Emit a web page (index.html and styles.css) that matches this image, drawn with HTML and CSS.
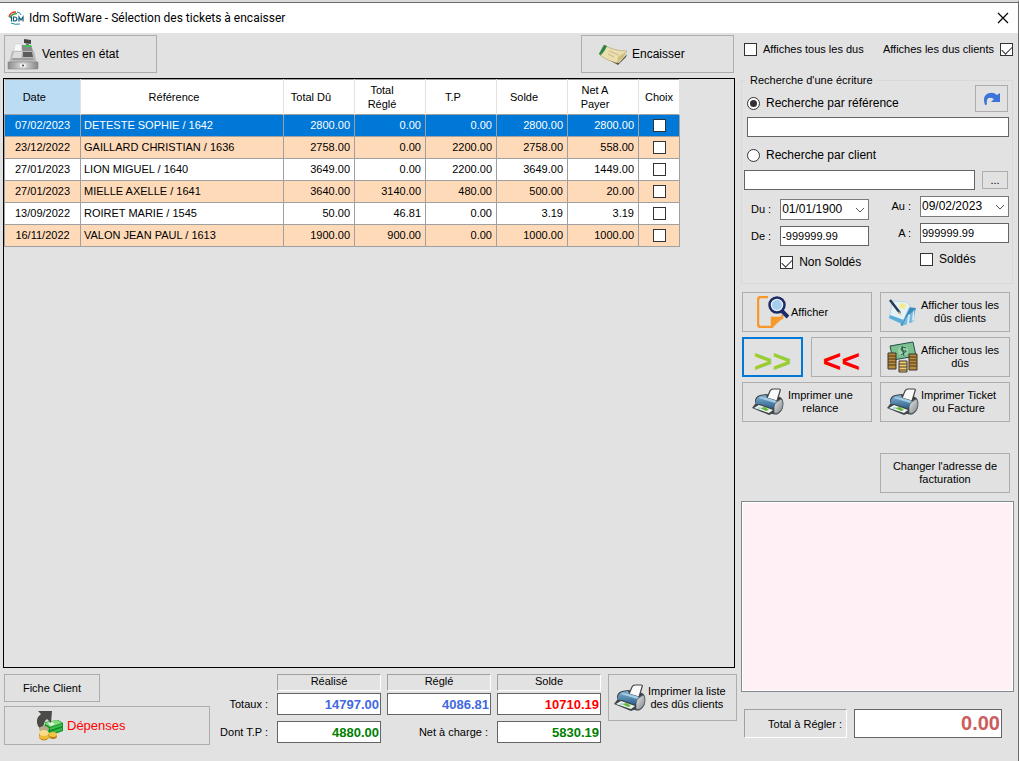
FILE: index.html
```html
<!DOCTYPE html>
<html lang="fr">
<head>
    <meta charset="UTF-8">
    <meta name="viewport" content="width=device-width, initial-scale=1.0">
    <title>Idm SoftWare - Sélection des tickets à encaisser</title>
    <link rel="stylesheet" href="styles.css">
</head>
<body>
    <svg class="defs" aria-hidden="true">
        <defs>
            <linearGradient id="blue" x1="0" y1="0" x2="0" y2="1">
                <stop offset="0" stop-color="#86b4d3"/>
                <stop offset="1" stop-color="#285f8b"/>
            </linearGradient>
            <linearGradient id="steel" x1="0" y1="0" x2="1" y2="0">
                <stop offset="0" stop-color="#8c8c8c"/>
                <stop offset=".5" stop-color="#dedede"/>
                <stop offset="1" stop-color="#858585"/>
            </linearGradient>
            <linearGradient id="side" x1="0" y1="0" x2="1" y2="1">
                <stop offset="0" stop-color="#e8eaec"/>
                <stop offset="1" stop-color="#7d8388"/>
            </linearGradient>
        </defs>
        <symbol id="printer" viewBox="0 0 32 28">
            <path d="M3 12Q4 8 8 7l6-1 14 3q4 2 3 8 0 6-5 9-2 1-5 0L4 21z" fill="#3a4046"/>
            <path d="M15 10 18 3q1-2 3-2h6q2 0 1 2l-3 10z" fill="#fafafa" stroke="#444" stroke-width="1.2"/>
            <path d="M4 12Q5 9 8 8l6-1 1 3 10 3-3 5-1 3L4 16z" fill="url(#blue)"/>
            <path d="m7 10 16 5 2-2-10-3-7-1z" fill="#a4cde4"/>
            <path d="M22 19q0-4 4-6l3-2q2 1 2 5 0 6-5 9-2 1-4 0z" fill="url(#side)" stroke="#55595e" stroke-width=".8"/>
            <path d="M3 16 0 20l17 7 5-2v-4L8 16z" fill="#42474c"/>
            <path d="m2 20 5-3 14 5-4 3z" fill="#eef4ef"/>
            <path d="m8 20 5-1 4 3-3 1z" fill="#62b938"/>
            <path d="m5 20 3-1 1 1-2 1z" fill="#8ad0ee"/>
        </symbol>
    </svg>

    <div class="window">
        <header class="titlebar">
            <svg class="logo" viewBox="0 0 16 14" aria-hidden="true">
                <path d="M1 6Q2 1 8 1" fill="none" stroke="#e23b2e" stroke-width="1.4"/>
                <path d="M2 7Q3 3 9 2.500" fill="none" stroke="#44a047" stroke-width="1.4"/>
                <path d="M9 1q3 0 4 3M3 12q4 2 9 1" fill="none" stroke="#1b8ca6" stroke-width="1"/>
                <path d="M3.500 5.500v5M5.500 6v4h1.500q2-.5 2-2T7 6zM11 10.500V6l2 3 2-3v4.500" fill="none" stroke="#0f5e7c" stroke-width="1.2"/>
            </svg>
            <h1 class="title">Idm SoftWare - Sélection des tickets à encaisser</h1>
            <button type="button" class="close" aria-label="Fermer">
                <svg viewBox="0 0 10 10" width="10" height="10"><path d="m0 0 10 10M10 0 0 10" stroke="#000" stroke-width="1.2"/></svg>
            </button>
        </header>

        <div class="main">
            <section class="left">
                <div class="toolbar">
                    <button type="button" class="btn big">
                        <svg class="icon" viewBox="0 0 32 32" aria-hidden="true">
                            <path d="m17 1 7 1v4l-7-1z" fill="#444"/>
                            <path d="M19 5h3v3h-3z" fill="#777"/>
                            <path d="M15 7h9l2 6H14z" fill="#8a8a8a"/>
                            <path d="M17 7h7l1 2h-8z" fill="#43c356"/>
                            <path d="M5 13h22l3 12H2z" fill="#b9b9b9"/>
                            <path d="M8 6h6l1 7H7z" fill="#f9f9f9" stroke="#ccc" stroke-width=".6"/>
                            <path d="M7 14h8l-1 6H5z" fill="#ddd"/>
                            <path d="M16 14h9l1 5H16z" fill="#5c5c5c"/>
                            <path d="M6 20h20l1 2H5z" fill="#9d9d9d"/>
                            <path d="M1 24h30v7H1z" fill="url(#steel)" stroke="#888" stroke-width=".6"/>
                            <path d="M13 26h6v3h-6z" fill="#eee"/>
                            <circle cx="16" cy="27.500" r="1" fill="#444"/>
                        </svg>
                        <span>Ventes en état</span>
                    </button>
                    <button type="button" class="btn big pay">
                        <svg class="icon" viewBox="0 0 32 32" aria-hidden="true">
                            <path d="m3 16 19 9 8-9-1 3-8 8L3 17z" fill="#5b5136"/>
                            <path d="M7 7q10 6 23 6-6 6-10 12Q8 22 2 16z" fill="#ecdfae" stroke="#a99a63" stroke-width=".6"/>
                            <path d="M7 7 10 8Q8 13 4 17l-2-1z" fill="#28864c"/>
                            <path d="m12 13 10 4M11 16l6 3" stroke="#b9ae84" stroke-width=".8"/>
                            <path d="m20 25 1-6 9-6-4 7z" fill="#d3bd7d"/>
                        </svg>
                        <span>Encaisser</span>
                    </button>
                </div>

                <div class="grid-box">
                    <table class="tickets">
                        <colgroup>
                            <col class="c-date"><col class="c-ref"><col class="c-num"><col class="c-num">
                            <col class="c-num"><col class="c-num"><col class="c-num"><col class="c-check">
                        </colgroup>
                        <thead>
                            <tr>
                                <th class="sorted">Date</th><th>Référence</th><th>Total Dû</th><th>Total<br>Réglé</th>
                                <th>T.P</th><th>Solde</th><th>Net A<br>Payer</th><th class="choice">Choix</th>
                            </tr>
                        </thead>
                        <tbody>
                            <tr class="selected"><td class="date">07/02/2023</td><td class="ref">DETESTE SOPHIE / 1642</td><td>2800.00</td><td>0.00</td><td>0.00</td><td>2800.00</td><td>2800.00</td><td class="choice"><input type="checkbox" aria-label="Choix 1642"></td></tr>
                            <tr><td class="date">23/12/2022</td><td class="ref">GAILLARD CHRISTIAN / 1636</td><td>2758.00</td><td>0.00</td><td>2200.00</td><td>2758.00</td><td>558.00</td><td class="choice"><input type="checkbox" aria-label="Choix 1636"></td></tr>
                            <tr><td class="date">27/01/2023</td><td class="ref">LION MIGUEL / 1640</td><td>3649.00</td><td>0.00</td><td>2200.00</td><td>3649.00</td><td>1449.00</td><td class="choice"><input type="checkbox" aria-label="Choix 1640"></td></tr>
                            <tr><td class="date">27/01/2023</td><td class="ref">MIELLE AXELLE / 1641</td><td>3640.00</td><td>3140.00</td><td>480.00</td><td>500.00</td><td>20.00</td><td class="choice"><input type="checkbox" aria-label="Choix 1641"></td></tr>
                            <tr><td class="date">13/09/2022</td><td class="ref">ROIRET MARIE / 1545</td><td>50.00</td><td>46.81</td><td>0.00</td><td>3.19</td><td>3.19</td><td class="choice"><input type="checkbox" aria-label="Choix 1545"></td></tr>
                            <tr><td class="date">16/11/2022</td><td class="ref">VALON JEAN PAUL / 1613</td><td>1900.00</td><td>900.00</td><td>0.00</td><td>1000.00</td><td>1000.00</td><td class="choice"><input type="checkbox" aria-label="Choix 1613"></td></tr>
                        </tbody>
                    </table>
                </div>

                <div class="footer">
                    <div class="footer-btns">
                        <button type="button" class="btn client">Fiche Client</button>
                        <button type="button" class="btn expenses">
                            <svg class="icon" viewBox="0 0 32 32" aria-hidden="true">
                                <path d="m12 12 13-2 5 3v8l-11 4-8-5z" fill="#15912a"/>
                                <path d="m11 13 13-3 5 3-12 4z" fill="#7fdc79"/>
                                <path d="m17 18 12-4v2l-12 4zM17 22l12-4v2l-12 4z" fill="#3fc04a"/>
                                <path d="m15 13 4-1 3 2-4 2z" fill="#e4f1e2"/>
                                <path d="M5 1h14l-1 12-4-4q-4 3-4 11-7-3-6-10 1-4 4-6z" fill="#4a4a48"/>
                                <ellipse cx="11" cy="19" rx="5" ry="3" fill="#b7aa86"/>
                                <ellipse cx="20" cy="26" rx="4" ry="3" fill="#b77d12"/>
                                <ellipse cx="20" cy="24.500" rx="4" ry="2.500" fill="#f5c542"/>
                                <path d="M6 23v5q5 5 10 0v-5z" fill="#bd8017"/>
                                <ellipse cx="11" cy="26.500" rx="5" ry="3" fill="#f1ba35"/>
                                <ellipse cx="11" cy="23" rx="5" ry="3" fill="#f7dc8a"/>
                            </svg>
                            <span>Dépenses</span>
                        </button>
                    </div>
                    <div class="totals">
                        <span></span>
                        <span class="sunken">Réalisé</span>
                        <span class="sunken">Réglé</span>
                        <span class="sunken">Solde</span>
                        <label for="realise">Totaux :</label>
                        <input class="field total blue" id="realise" type="text" value="14797.00">
                        <input class="field total blue" type="text" value="4086.81" aria-label="Réglé">
                        <input class="field total red" type="text" value="10710.19" aria-label="Solde">
                        <label for="tp">Dont T.P :</label>
                        <input class="field total green" id="tp" type="text" value="4880.00">
                        <label for="net">Net à charge :</label>
                        <input class="field total green" id="net" type="text" value="5830.19">
                    </div>
                    <button type="button" class="btn print-list">
                        <svg class="icon" aria-hidden="true"><use href="#printer"/></svg>
                        <span>Imprimer la liste<br>des dûs clients</span>
                    </button>
                </div>
            </section>

            <aside class="right">
                <div class="options">
                    <label class="check"><input type="checkbox">Affiches tous les dus</label>
                    <label class="check">Affiches les dus clients<input type="checkbox" checked></label>
                </div>

                <fieldset class="search">
                    <legend>Recherche d'une écriture</legend>
                    <div class="search-head">
                        <label class="check large"><input type="radio" name="mode" checked>Recherche par référence</label>
                        <button type="button" class="btn redo" aria-label="Actualiser">
                            <svg viewBox="0 0 18 14" width="18" height="14"><path d="M2 13Q-1 4 5 1.500q5-2 9 1.500l3-2v9H8l3-3Q5 4 4 8q-.5 2 0 4.500z" fill="#3b73d9"/></svg>
                        </button>
                    </div>
                    <input class="field ref-field" type="text" aria-label="Référence">
                    <label class="check large by-client"><input type="radio" name="mode">Recherche par client</label>
                    <div class="client-row">
                        <input class="field" type="text" aria-label="Client">
                        <button type="button" class="btn more">...</button>
                    </div>
                    <div class="ranges">
                        <div class="range low">
                            <label for="du">Du :</label>
                            <div class="picker">
                                <select id="du"><option>01/01/1900</option></select>
                                <svg viewBox="0 0 10 6" width="10" height="6"><path d="m1 1 4 4 4-4" fill="none" stroke="#555"/></svg>
                            </div>
                            <label for="de">De :</label>
                            <input class="field" id="de" type="text" value="-999999.99">
                            <label class="check large settled"><input type="checkbox" checked>Non Soldés</label>
                        </div>
                        <div class="range">
                            <label for="au">Au :</label>
                            <div class="picker">
                                <select id="au"><option>09/02/2023</option></select>
                                <svg viewBox="0 0 10 6" width="10" height="6"><path d="m1 1 4 4 4-4" fill="none" stroke="#555"/></svg>
                            </div>
                            <label for="a">A :</label>
                            <input class="field" id="a" type="text" value="999999.99">
                            <label class="check large settled"><input type="checkbox">Soldés</label>
                        </div>
                    </div>
                </fieldset>

                <div class="actions">
                    <button type="button" class="btn show">
                        <svg class="icon" viewBox="0 0 32 32" aria-hidden="true">
                            <path d="M11 1H4Q1 1 1 4v24q0 3 3 3h11V22h10v-3" fill="none" stroke="#f8992b" stroke-width="2.500"/>
                            <path d="M16 31v-9h10z" fill="#f8992b"/>
                            <path d="m24 14 7 7" stroke="#1d2a66" stroke-width="4"/>
                            <circle cx="20" cy="9" r="7.500" fill="#e6f1fa" stroke="#1d2a66" stroke-width="2.500"/>
                            <circle cx="20" cy="9" r="5" fill="#a5cdf0"/>
                        </svg>
                        <span>Afficher</span>
                    </button>
                    <button type="button" class="btn">
                        <svg class="icon" viewBox="0 0 32 32" aria-hidden="true">
                            <path d="m12 10 17 2-4 14-11 4z" fill="#3b8abd"/>
                            <path d="m19 22 9-9-1 12-12 5z" fill="#79b9df"/>
                            <path d="m20 28 1-9 2-1-1 10zM25 25l1-9 1-1v9z" fill="#d6edf8"/>
                            <path d="M2 22 6 5l14 1 3 4-8 17z" fill="#e4f2f8" stroke="#a7cfe2" stroke-width=".7"/>
                            <path d="m2 22 13 6 2-4-14-5z" fill="#5cacd8"/>
                            <path d="m13 7 6 1-1 5-6-1z" fill="#f7e98d"/>
                            <path d="M3 4 13 17" stroke="#243b55" stroke-width="2.500"/>
                            <path d="m12 15 3 5-4-3z" fill="#d9b57c"/>
                        </svg>
                        <span>Afficher tous les<br>dûs clients</span>
                    </button>
                    <div class="arrows">
                        <button type="button" class="btn next">&gt;&gt;</button>
                        <button type="button" class="btn prev">&lt;&lt;</button>
                    </div>
                    <button type="button" class="btn">
                        <svg class="icon" viewBox="0 0 32 32" aria-hidden="true">
                            <path d="m3 5 23-4 3 14-23 4z" fill="#7bc08e" stroke="#254d4d"/>
                            <circle cx="16" cy="10" r="5" fill="#9ad5a8"/>
                            <path d="M19 7q-5-2-5 1t4 2-4 4M15 5l2 10" fill="none" stroke="#24504b"/>
                            <path d="M1 12h8v16H1zM22 13h8v16h-8z" fill="#b98a37" stroke="#3a3432"/>
                            <path d="M1 15h8M1 18h8M1 21h8M1 24h8M22 16h8M22 19h8M22 22h8M22 25h8" stroke="#4a3b25" stroke-width="1.200"/>
                            <path d="M12 20h8v11h-8z" fill="#f0cd72" stroke="#3a3432"/>
                            <path d="M12 23h8M12 26h8M12 29h8" stroke="#4a3b25"/>
                        </svg>
                        <span>Afficher tous les<br>dûs</span>
                    </button>
                    <button type="button" class="btn reminder">
                        <svg class="icon" aria-hidden="true"><use href="#printer"/></svg>
                        <span>Imprimer une<br>relance</span>
                    </button>
                    <button type="button" class="btn">
                        <svg class="icon" aria-hidden="true"><use href="#printer"/></svg>
                        <span>Imprimer Ticket<br>ou Facture</span>
                    </button>
                    <button type="button" class="btn address">Changer l'adresse de<br>facturation</button>
                </div>

                <textarea class="notes" aria-label="Détail"></textarea>

                <div class="due">
                    <label class="sunken" for="due">Total à Régler :</label>
                    <input class="field" id="due" type="text" value="0.00">
                </div>
            </aside>
        </div>
    </div>
</body>
</html>
```
FILE: styles.css
```css
*{
    box-sizing: border-box;
}
body{
    margin: 0;
    font: 11px/13px "Liberation Sans", Arial, sans-serif;
    color: #000;
    background-color: #dadada;
}
input, select, button, textarea{
    font: inherit;
    color: inherit;
    margin: 0;
}
.defs{
    position: absolute;
    width: 0;
    height: 0;
}
.window{
    min-height: 100vh;
    display: flex;
    flex-direction: column;
    border-top: 2px solid #dadada;
    border-right: 1px solid #6b6b6b;
    background-color: #e2e2e2;
}
.titlebar{
    height: 31px;
    display: flex;
    align-items: center;
    gap: 5px;
    padding: 0 10px 0 8px;
    border-top: 1px solid #6b6b6b;
    background-color: #fff;
}
.logo{
    width: 16px;
    height: 14px;
}
.title{
    flex: 1;
    margin: 0;
    font: 12px/16px Roboto, "Open Sans", sans-serif;
}
.close{
    display: flex;
    padding: 0;
    border: 0;
    background: none;
}
.close svg{
    overflow: visible;
}
.main{
    flex: 1;
    display: flex;
}
.left{
    flex: 1;
    display: flex;
    flex-direction: column;
    padding: 2px 0 16px 3px;
}
.right{
    width: 283px;
    display: flex;
    flex-direction: column;
    padding: 8px 4px 23px 6px;
}

/* boutons */
.btn{
    display: flex;
    align-items: center;
    justify-content: center;
    gap: 2px;
    padding: 0 6px;
    border: 1px solid #adadad;
    background-color: #e1e1e1;
    text-align: center;
}
.icon{
    width: 32px;
    height: 32px;
    flex: none;
}
.toolbar{
    display: flex;
    justify-content: space-between;
    padding: 0 1px;
    margin-bottom: 5px;
}
.big{
    width: 153px;
    height: 38px;
    justify-content: flex-start;
    gap: 3px;
    padding: 0 2px;
    font-size: 12px;
}
.pay{
    padding-left: 15px;
}

/* grille des tickets */
.grid-box{
    flex: 1;
    border: 1px solid #000;
}
.tickets{
    width: 676px;
    table-layout: fixed;
    border-collapse: collapse;
    border-top: 1px solid #a0a0a0;
}
.c-date{ width: 76px; }
.c-ref{ width: 203px; }
.c-num{ width: 71px; }
.c-check{ width: 41px; }
.tickets th{
    height: 35px;
    padding: 0 16px 0 0;
    border-right: 1px solid #e2e2e2;
    background-color: #fff;
    font-weight: normal;
    line-height: 14px;
}
.tickets th.sorted{
    background-color: #bcdcf4;
}
.tickets td{
    height: 22px;
    padding: 0 4px;
    border: 1px solid #a0a0a0;
    background-color: #fff;
    text-align: right;
}
.tickets td.date{
    text-align: center;
    padding: 0;
}
.tickets td.ref{
    padding-left: 3px;
    text-align: left;
}
.tickets tr:nth-child(even) td{
    background-color: #ffdab9;
}
.tickets tr.selected td{
    background-color: #0078d7;
    color: #fff;
}
.tickets .choice{
    padding: 0;
    text-align: center;
}
.tickets input{
    margin: 0 auto;
}

/* cases et champs */
input[type="checkbox"], input[type="radio"]{
    appearance: none;
    flex: none;
    display: grid;
    place-content: center;
    width: 13px;
    height: 13px;
    border: 1px solid #333;
    background-color: #fff;
}
input[type="radio"]{
    border-radius: 50%;
}
input[type="checkbox"]:checked::before{
    content: "";
    width: 9px;
    height: 5px;
    border: solid #333;
    border-width: 0 0 1px 1px;
    transform: translateY(-1px) rotate(-45deg);
}
input[type="radio"]:checked::before{
    content: "";
    width: 7px;
    height: 7px;
    border-radius: 50%;
    background-color: #333;
}
.check{
    display: flex;
    align-items: center;
    gap: 6px;
}
.large{
    font-size: 12px;
}
.field{
    width: 100%;
    min-width: 0;
    height: 20px;
    padding: 0 1px;
    border: 1px solid #646464;
    background-color: #fff;
}
.sunken{
    border: 1px solid;
    border-color: #a0a0a0 #fff #fff #a0a0a0;
    text-align: center;
}

/* bas de page */
.footer{
    display: flex;
    align-items: flex-start;
    padding: 6px 0 0 1px;
    margin-right: -2px;
}
.footer-btns{
    width: 206px;
    display: flex;
    flex-direction: column;
    gap: 4px;
}
.client{
    width: 96px;
    height: 28px;
}
.expenses{
    height: 39px;
    justify-content: flex-start;
    padding-left: 28px;
    font-size: 13px;
    color: #f00;
}
.totals{
    flex: 1;
    display: grid;
    grid-template-columns: 1fr 104px 104px 104px;
    grid-template-rows: 16px 22px 28px;
    gap: 3px 6px;
    align-items: center;
    text-align: right;
    margin-bottom: -3px;
}
.totals label{
    padding-right: 3px;
}
.totals .sunken{
    height: 17px;
}
.total{
    height: 22px;
    font-size: 13px;
    font-weight: bold;
    text-align: right;
}
.blue{ color: #4169e1; }
.red{ color: #f00; }
.green{ color: #008000; }
.print-list{
    width: 129px;
    height: 47px;
    margin-left: 7px;
    justify-content: flex-start;
    padding: 0 5px;
}

/* panneau de recherche */
.options{
    display: flex;
    justify-content: space-between;
    padding: 2px 1px 0 3px;
    margin-bottom: 18px;
}
.search{
    min-width: 0;
    margin: 0 1px 0 0;
    padding: 0 3px 14px 2px;
    border: 1px solid #d9d9d9;
}
.search legend{
    margin-left: 2px;
    padding: 0 4px;
}
.search-head{
    display: flex;
    justify-content: space-between;
    align-items: flex-end;
    padding: 0 1px 0 3px;
    margin-top: -2px;
}
.search-head .check{
    padding-bottom: 2px;
}
.redo{
    width: 33px;
    height: 27px;
    padding: 0;
}
.ref-field{
    display: block;
    width: auto;
    min-width: calc(100% - 3px);
    margin: 5px 0 0 3px;
}
.by-client{
    padding: 12px 3px 8px;
}
.client-row{
    display: flex;
    align-items: center;
    gap: 7px;
    padding-right: 1px;
}
.more{
    flex: none;
    width: 26px;
    height: 18px;
}
.ranges{
    display: flex;
    justify-content: space-between;
    align-items: flex-start;
    padding-top: 6px;
}
.range{
    display: grid;
    grid-template-columns: auto 89px;
    gap: 6px 9px;
    align-items: center;
    justify-items: end;
}
.low{
    padding: 3px 0 0 7px;
}
.settled{
    grid-column: 2;
    justify-self: start;
    padding-top: 4px;
    white-space: nowrap;
}
.picker{
    width: 89px;
    display: grid;
    align-items: center;
}
.picker select{
    grid-area: 1 / 1;
    appearance: none;
    height: 21px;
    padding: 0 1px;
    border: 1px solid #7a7a7a;
    border-radius: 0;
    background-color: #fff;
    font-size: 12px;
}
.picker svg{
    grid-area: 1 / 1;
    justify-self: end;
    margin-right: 4px;
    pointer-events: none;
}

/* actions */
.actions{
    display: grid;
    grid-template-columns: 1fr 1fr;
    grid-auto-rows: 40px;
    gap: 5px 8px;
    padding: 8px 4px 8px 1px;
}
.actions .btn{
    justify-content: flex-start;
}
.actions .show{
    padding-left: 14px;
}
.actions .reminder{
    gap: 4px;
    padding-left: 9px;
}
.arrows{
    display: grid;
    grid-template-columns: 1fr 1fr;
    gap: 8px;
}
.arrows .btn{
    justify-content: center;
    padding: 8px 6px 0;
    font-size: 32px;
    font-weight: bold;
}
.arrows .next{
    border: 2px solid #0078d7;
    color: #9acd32;
}
.prev{
    color: #f00;
}
.actions .address{
    display: block;
    grid-column: 2;
    margin: 26px 0 -26px;
}
.notes{
    flex: 1;
    display: block;
    width: 100%;
    margin-top: 26px;
    border: 1px solid #828790;
    outline: 1px solid #fff;
    outline-offset: -2px;
    background-color: #fff0f5;
    resize: none;
}
.due{
    display: flex;
    gap: 7px;
    padding: 17px 12px 0 3px;
}
.due .sunken{
    width: 103px;
    padding: 8px 4px 0 0;
    text-align: right;
}
.due .field{
    flex: 1;
    height: 29px;
    font-size: 20px;
    font-weight: bold;
    color: #cd5c5c;
    text-align: right;
}
```
